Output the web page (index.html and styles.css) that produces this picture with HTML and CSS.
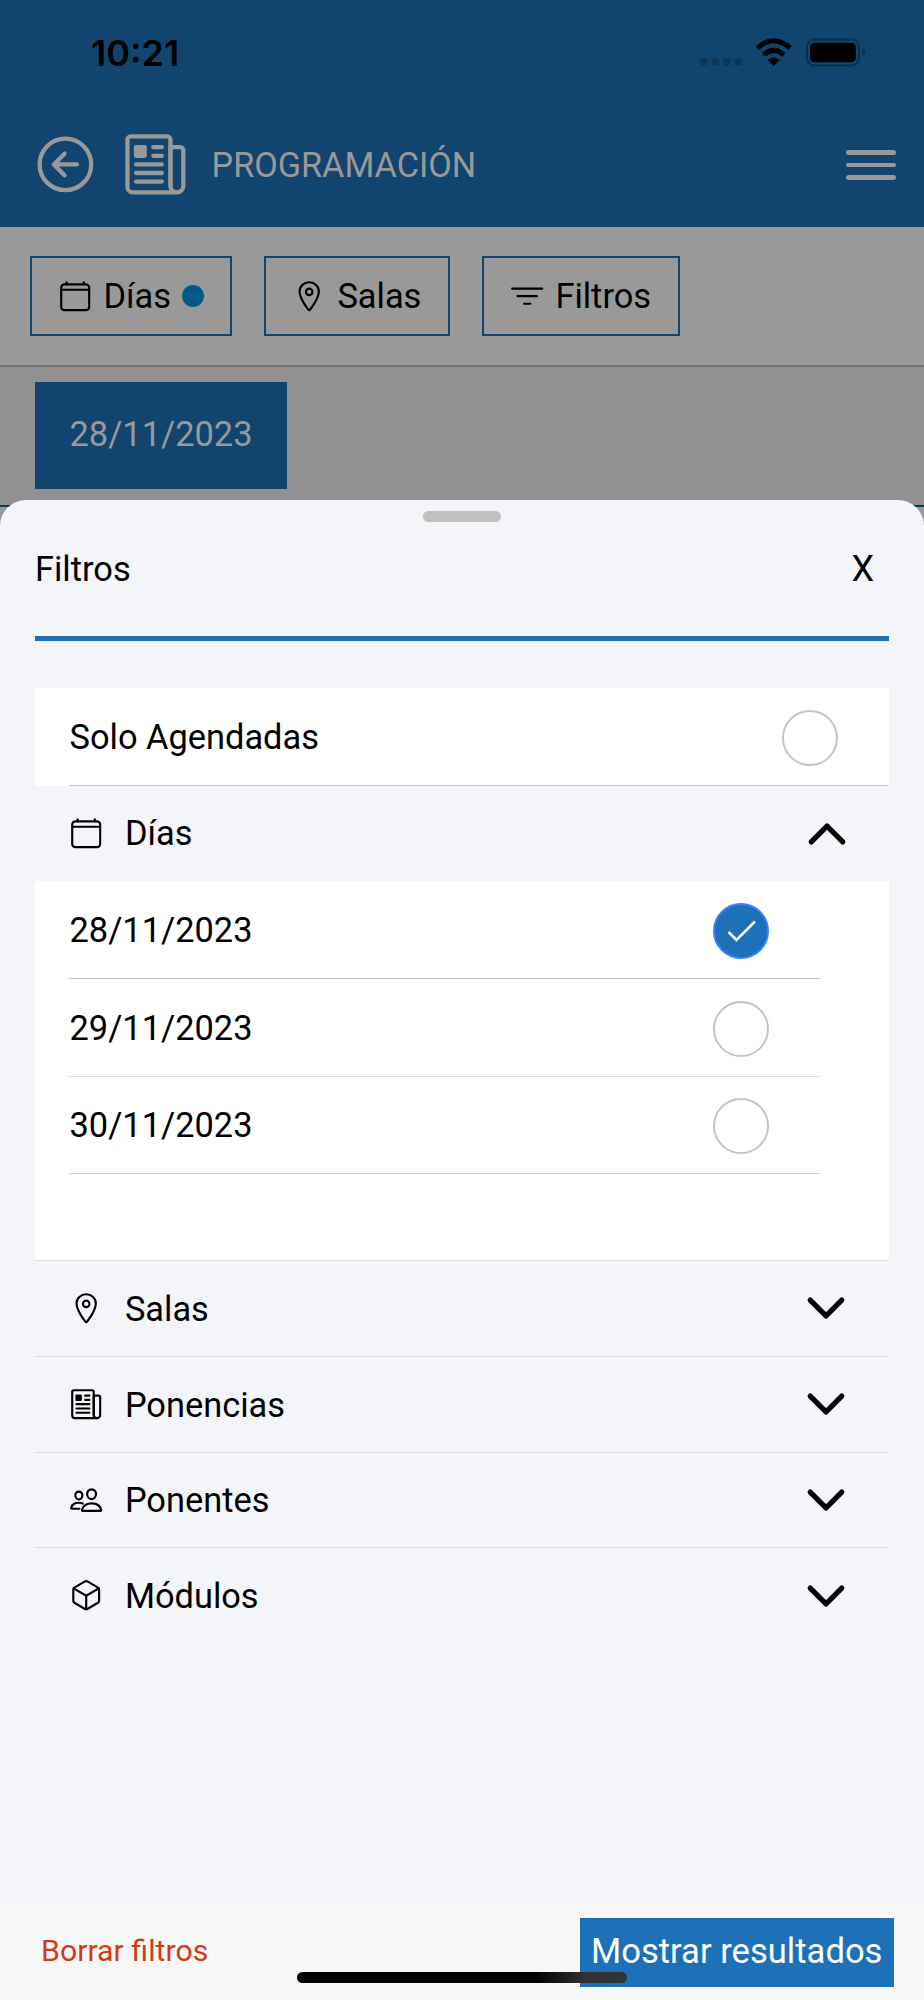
FILE: index.html
```html
<!DOCTYPE html>
<html lang="es">
<head>
<meta charset="utf-8">
<title>Programación</title>
<link rel="stylesheet" href="styles.css">
</head>
<body>
<svg class="defs" width="0" height="0">
  <symbol id="calendar" viewBox="0 0 512 512"><rect x="48" y="80" width="416" height="384" rx="48"/><path d="M128 48v32M384 48v32M464 160H48" stroke-linecap="round"/></symbol>
  <symbol id="location" viewBox="0 0 512 512"><path d="M256 48c-79.500 0-144 61.390-144 137 0 87 96 224.870 131.250 272.490a15.770 15.770 0 0 0 25.500 0C304 409.890 400 272.070 400 185c0-75.610-64.500-137-144-137z"/><circle cx="256" cy="192" r="48"/></symbol>
  <symbol id="filter" viewBox="0 0 512 512"><path d="M32 144h448M112 256h288M208 368h96"/></symbol>
  <symbol id="news" viewBox="0 0 512 512"><path d="M368 415.860V72a24.070 24.070 0 0 0-24-24H72a24.070 24.070 0 0 0-24 24v352a40.120 40.120 0 0 0 40 40h328"/><path d="M416 464a48 48 0 0 1-48-48V128h72a24 24 0 0 1 24 24v264a48 48 0 0 1-48 48z"/><path d="M240 128h64M240 192h64M112 256h192M112 320h192M112 384h192"/><path class="solid" d="M176 208h-64a16 16 0 0 1-16-16v-64a16 16 0 0 1 16-16h64a16 16 0 0 1 16 16v64a16 16 0 0 1-16 16z"/></symbol>
  <symbol id="people" viewBox="0 0 512 512"><path d="M402 168c-2.930 40.670-33.100 72-66 72s-63.120-31.320-66-72c-3-42.310 26.370-72 66-72s69 30.460 66 72z"/><path d="M336 304c-65.170 0-127.840 32.370-143.540 95.410-2.080 8.340 3.150 16.590 11.720 16.590h263.650c8.570 0 13.770-8.250 11.720-16.590C463.850 335.360 401.180 304 336 304z"/><path d="M200 185.940c-2.340 32.480-26.720 58.060-53 58.060s-50.700-25.570-53-58.060C91.610 152.150 115.340 128 147 128s55.390 24.770 53 57.940zM206 306c-18.050-8.270-37.930-11.450-59-11.450-52 0-102.100 25.850-114.650 76.200-1.650 6.660 2.530 13.250 9.370 13.250H154"/></symbol>
  <symbol id="cube" viewBox="0 0 512 512"><path d="M448 341.370V170.610A32 32 0 0 0 432.110 143l-152-88.460a47.940 47.940 0 0 0-48.240 0L79.890 143A32 32 0 0 0 64 170.610v170.760A32 32 0 0 0 79.890 369l152 88.460a48 48 0 0 0 48.240 0l152-88.460A32 32 0 0 0 448 341.370z"/><path d="M69 153.990l187 110 187-110M256 463.990v-200"/></symbol>
  <symbol id="back" viewBox="0 0 512 512"><circle cx="256" cy="256" r="192"/><path d="M249.380 336L170 256l79.380-80M181 256h161"/></symbol>
  <symbol id="down" viewBox="0 0 512 512"><path d="M112 184l144 144 144-144"/></symbol>
  <symbol id="up" viewBox="0 0 512 512"><path d="M112 328l144-144 144 144"/></symbol>
</svg>
<div class="phone">
  <header class="header">
    <div class="status">
      <span class="time">10:21</span>
      <svg class="status-icons" width="170" height="30" viewBox="0 0 170 30">
        <g fill="#0d375a"><rect x="0" y="20" width="7.400" height="7.400" rx="2.500"/><rect x="11.600" y="20" width="7.400" height="7.400" rx="2.500"/><rect x="23.200" y="20" width="7.400" height="7.400" rx="2.500"/><rect x="34.700" y="20" width="7.400" height="7.400" rx="2.500"/></g>
        <g fill="none" stroke="#000" stroke-width="5"><path d="M57.500 10Q73.700-4.500 89.900 10"/><path d="M63.800 16.800Q73.700 8 83.600 16.800"/></g>
        <path d="M67.800 22Q73.700 16.500 79.600 22L73.700 28z"/>
        <rect x="106.900" y="1.500" width="52" height="26" rx="7.500" fill="none" stroke="#0b2e4b" stroke-width="2"/>
        <rect x="110" y="4.800" width="45.800" height="19.500" rx="4.500"/>
        <path d="M162.300 10.500q5.500 4 0 8z" fill="#0b2e4b"/>
      </svg>
    </div>
    <div class="toolbar">
      <svg class="icon large"><use href="#back"/></svg>
      <svg class="icon large news"><use href="#news"/></svg>
      <h1 class="title">PROGRAMACIÓN</h1>
      <div class="menu"><i></i><i></i><i></i></div>
    </div>
  </header>
  <div class="chips">
    <div class="chip days"><svg class="icon"><use href="#calendar"/></svg><span>Días</span><i class="dot"></i></div>
    <div class="chip rooms"><svg class="icon"><use href="#location"/></svg><span>Salas</span></div>
    <div class="chip filters"><svg class="icon"><use href="#filter"/></svg><span>Filtros</span></div>
  </div>
  <div class="dates"><div class="date">28/11/2023</div></div>
  <section class="sheet">
    <div class="handle"></div>
    <div class="sheet-head"><span>Filtros</span><span class="close">X</span></div>
    <div class="only"><span>Solo Agendadas</span><i class="check"></i></div>
    <div class="group first"><svg class="icon"><use href="#calendar"/></svg><span>Días</span><svg class="icon chevron open"><use href="#up"/></svg></div>
    <div class="options">
      <div class="option"><span>28/11/2023</span><i class="check on"><svg width="56" height="56" viewBox="0 0 56 56"><path d="M15.500 29l8 8L42 18.500"/></svg></i></div>
      <div class="option light"><span>29/11/2023</span><i class="check"></i></div>
      <div class="option mid"><span>30/11/2023</span><i class="check"></i></div>
    </div>
    <div class="group"><svg class="icon"><use href="#location"/></svg><span>Salas</span><svg class="icon chevron"><use href="#down"/></svg></div>
    <div class="group"><svg class="icon"><use href="#news"/></svg><span>Ponencias</span><svg class="icon chevron"><use href="#down"/></svg></div>
    <div class="group"><svg class="icon"><use href="#people"/></svg><span>Ponentes</span><svg class="icon chevron"><use href="#down"/></svg></div>
    <div class="group"><svg class="icon"><use href="#cube"/></svg><span>Módulos</span><svg class="icon chevron"><use href="#down"/></svg></div>
    <footer class="footer"><span class="clear">Borrar filtros</span><div class="submit">Mostrar resultados</div></footer>
  </section>
  <div class="home-bar"></div>
</div>
</body>
</html>
```

FILE: styles.css
```css
* { box-sizing: border-box; }
body { margin: 0; font: 34.4px/40px Roboto, sans-serif; color: #000; }
i { display: block; }
.defs { position: absolute; }
.phone { position: relative; width: 924px; height: 2000px; overflow: hidden; background: #999; }

.icon { width: 34.4px; height: 34.4px; flex: none; fill: none; stroke: currentColor; stroke-width: 32px; stroke-linejoin: round; stroke-linecap: round; }
.icon.large { width: 68.8px; height: 68.8px; }
.solid { fill: currentColor; stroke: none; }

.header { height: 227px; background: #11446e; color: #999; }
.status { display: flex; justify-content: space-between; height: 100px; padding: 38px 54px 0 91px; color: #000; }
.time { font: 600 36px/30px Inter, sans-serif; }
.status-icons { flex: none; }
.toolbar { display: flex; align-items: center; height: 128px; padding: 0 28px 0 30.500px; }
.news { margin-left: 22px; }
.title { margin: 0 auto 0 21.500px; padding-top: 2px; font-size: 34.2px; font-weight: 400; line-height: 40px; }
.menu { display: grid; gap: 8px; width: 50.400px; padding-top: 2px; }
.menu i { height: 4.600px; border-radius: 3px; background: #999; }

.chips { display: flex; align-items: flex-start; height: 139.5px; padding: 29px 30px 0; border-bottom: 2px solid #707070; }
.chip { display: flex; align-items: center; height: 80px; padding-left: 26px; border: 2px solid #11446e; }
.days { width: 202px; }
.rooms { width: 186px; margin-left: 32px; }
.filters { width: 198px; margin-left: 32px; }
.chip span { margin-left: 11px; }
.dot { width: 22px; height: 22px; margin-left: 11.500px; border-radius: 50%; background: #005c87; }
.dates { height: 140.500px; padding: 15.500px 35px; background: #919191; border-bottom: 2px solid #003d5b; }
.date { width: 252px; height: 107px; padding-left: 34.500px; line-height: 105px; color: #999; background: #11446e; }

.sheet { position: absolute; inset: 500px 0 0; display: flex; flex-direction: column; padding: 11px 35px 0; border-radius: 26px 26px 0 0; background: #f3f5f9; }
.handle { align-self: center; width: 78px; height: 11px; border-radius: 6px; background: #c0c0be; }
.sheet-head { display: flex; justify-content: space-between; height: 119px; padding: 27px 15px 0 0; border-bottom: 5px solid #1d71b8; }
.close { font-size: 36px; }
.only { display: flex; align-items: center; justify-content: space-between; height: 98px; margin-top: 47px; padding: 2px 51.500px 0 34.500px; background: linear-gradient(#c5c5c7, #c5c5c7) 34px 97px / 820px 1px no-repeat #fff; }
.only span, .option span, .first span { padding-bottom: 2px; }
.check { width: 56px; height: 56px; border: 2px solid #c5c5c5; border-radius: 50%; }
.on { border-color: #3880ff; background: #1d71b8; }
.on svg { display: block; margin: -2px; fill: none; stroke: #fff; stroke-width: 2.500px; }
.options { height: 379px; padding: 0 69px 0 34px; background: #fff; }
.option { display: flex; align-items: center; justify-content: space-between; height: 97.75px; padding: 3px 51.500px 0 .5px; border-bottom: 1px solid #c2c2c3; }
.option.light { border-color: #dedede; }
.option.mid { border-color: #d0d0d0; }
.group { display: flex; align-items: center; height: 95.75px; padding: 0 35px 0 34px; border-top: 1px solid #dedfe3; }
.group.first { height: 95px; padding-right: 34.500px; border: 0; }
.group span { margin: 0 auto 0 21.500px; }
.group:not(.first) span { padding-top: 1px; }
.chevron { width: 56px; height: 56px; margin-right: 0; stroke-width: 48px; }
.footer { display: flex; align-items: flex-start; justify-content: space-between; height: 95px; margin: auto -35px 0; padding: 13px 30.500px 0 41px; background: #f7f7f7; }
.clear { margin-top: 13px; font-size: 30.300px; color: #cf3c17; }
.submit { width: 313.500px; height: 68.500px; line-height: 67px; font-size: 34.6px; text-align: center; color: #fff; background: #1d71b8; white-space: nowrap; }
.home-bar { position: absolute; left: 297px; top: 1972px; width: 330px; height: 11px; border-radius: 6px; background: linear-gradient(90deg, #000 72%, #333 88%); }
```
